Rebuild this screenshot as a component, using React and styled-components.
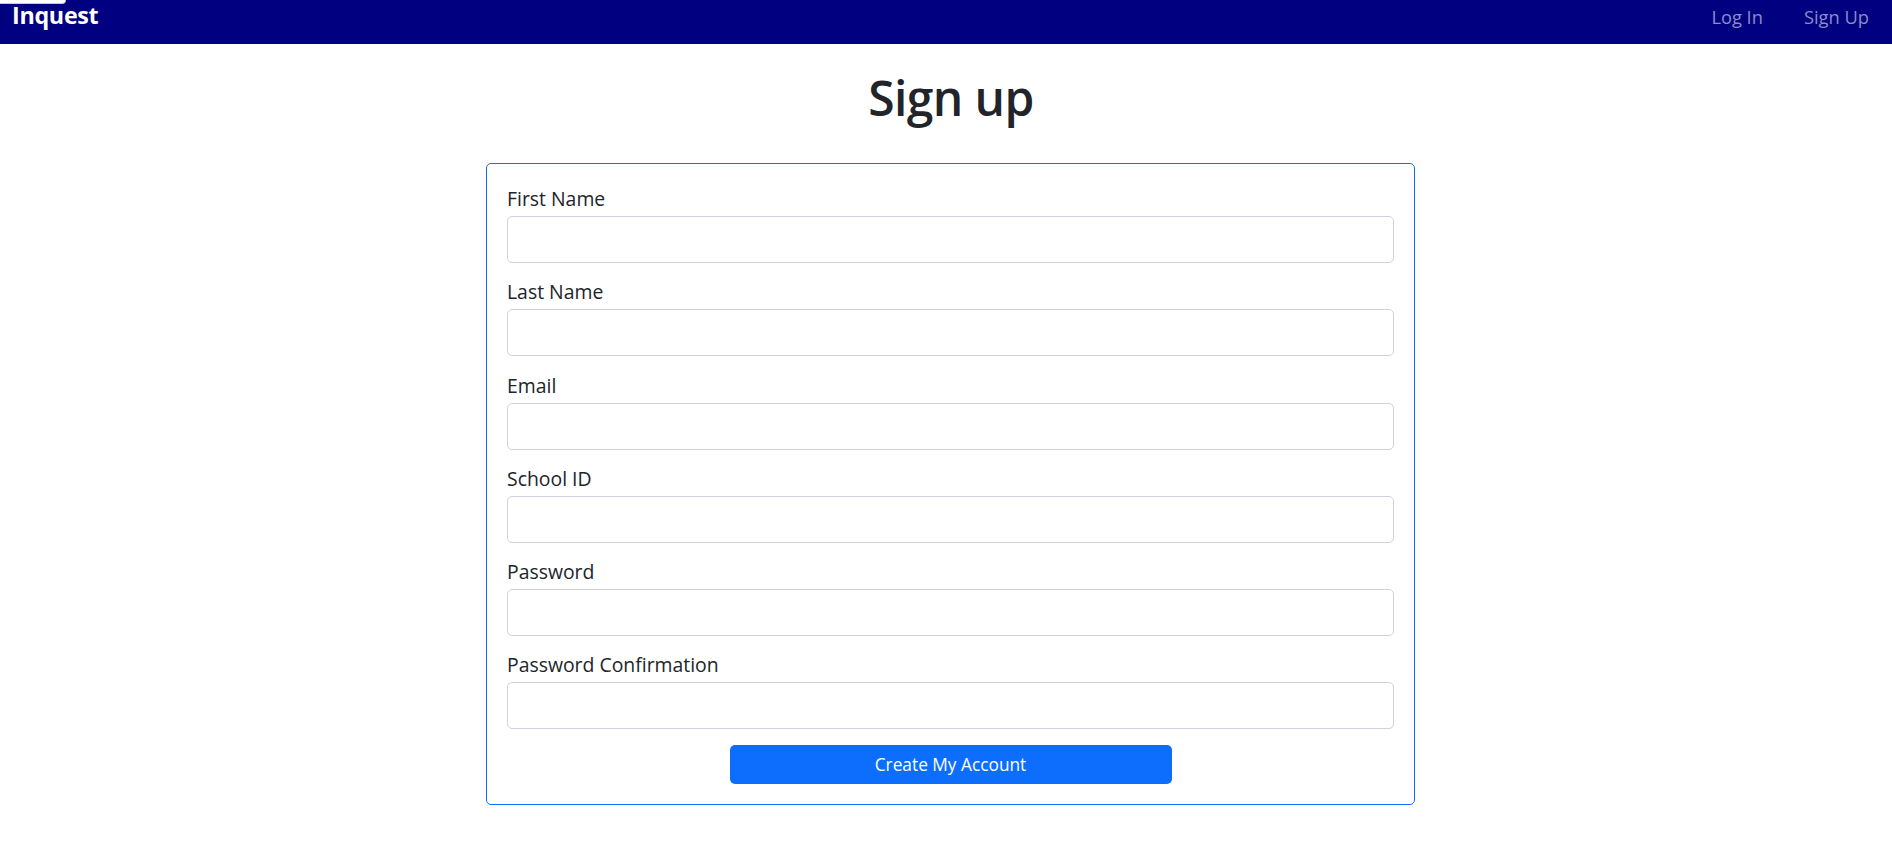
import React from "react";
import styled, { createGlobalStyle } from "styled-components";

const Global = createGlobalStyle`
  html, body { margin: 0; padding: 0; background: #fff; }
  body {
    font-family: "Open Sans", "Noto Sans", sans-serif;
    color: #212529;
  }
  * { box-sizing: border-box; }
`;

const Page = styled.div`
  position: relative;
  min-height: 852px;
`;

const CornerTab = styled.div`
  position: absolute;
  left: 0;
  top: 0;
  width: 66px;
  height: 4px;
  background: #fff;
  border: 1px solid #c8c8d8;
  border-top: none;
  border-left: none;
  border-bottom-right-radius: 5px;
`;

const Navbar = styled.nav`
  height: 44px;
  background: #000080;
  display: flex;
  align-items: flex-start;
  justify-content: space-between;
  padding: 0 23px 0 12px;
`;

const Brand = styled.a`
  font-size: 23.3px;
  font-weight: 700;
  color: #fff;
  line-height: 30px;
  letter-spacing: -0.3px;
  text-decoration: none;
`;

const NavLinks = styled.div`
  display: flex;
  gap: 41px;
  margin-top: 3px;
`;

const NavLink = styled.a`
  color: #8c8cc6;
  font-size: 18.3px;
  line-height: 28px;
  text-decoration: none;
`;

const Main = styled.main`
  display: flex;
  flex-direction: column;
  align-items: center;
`;

const Title = styled.h1`
  margin: 22px 0 33px 10px;
  font-size: 48px;
  font-weight: 600;
  line-height: 64px;
  color: #212529;
  letter-spacing: -0.6px;
`;

const Card = styled.form`
  width: 929px;
  border: 1px solid #0d6efd;
  border-radius: 5px;
  padding: 20px;
  display: flex;
  flex-direction: column;
  margin-left: 9px;
`;

const Group = styled.div`
  display: flex;
  flex-direction: column;
  margin-bottom: 14.3px;
`;

const Label = styled.label`
  font-size: 19.4px;
  line-height: 30px;
  margin-bottom: 2px;
  color: #212529;
`;

const Input = styled.input`
  height: 47px;
  width: 100%;
  border: 1px solid #ced4da;
  border-radius: 5px;
  padding: 0 15px;
  font: inherit;
  font-size: 20px;
  outline: none;
`;

const Submit = styled.button`
  align-self: center;
  width: 442px;
  height: 39px;
  margin-top: 1px;
  background: #0d6efd;
  color: #fff;
  border: none;
  border-radius: 5px;
  font-family: "Open Sans", "Noto Sans", sans-serif;
  font-size: 17.3px;
  cursor: pointer;
`;

const fields = [
  { label: "First Name", type: "text" },
  { label: "Last Name", type: "text" },
  { label: "Email", type: "email" },
  { label: "School ID", type: "text" },
  { label: "Password", type: "password" },
  { label: "Password Confirmation", type: "password" },
];

export default function App() {
  return (
    <Page>
      <Global />
      <Navbar>
        <Brand href="#">Inquest</Brand>
        <NavLinks>
          <NavLink href="#">Log In</NavLink>
          <NavLink href="#">Sign Up</NavLink>
        </NavLinks>
      </Navbar>
      <CornerTab />
      <Main>
        <Title>Sign up</Title>
        <Card onSubmit={(e) => e.preventDefault()}>
          {fields.map((f) => (
            <Group key={f.label}>
              <Label>{f.label}</Label>
              <Input type={f.type} />
            </Group>
          ))}
          <Submit type="submit">Create My Account</Submit>
        </Card>
      </Main>
    </Page>
  );
}
